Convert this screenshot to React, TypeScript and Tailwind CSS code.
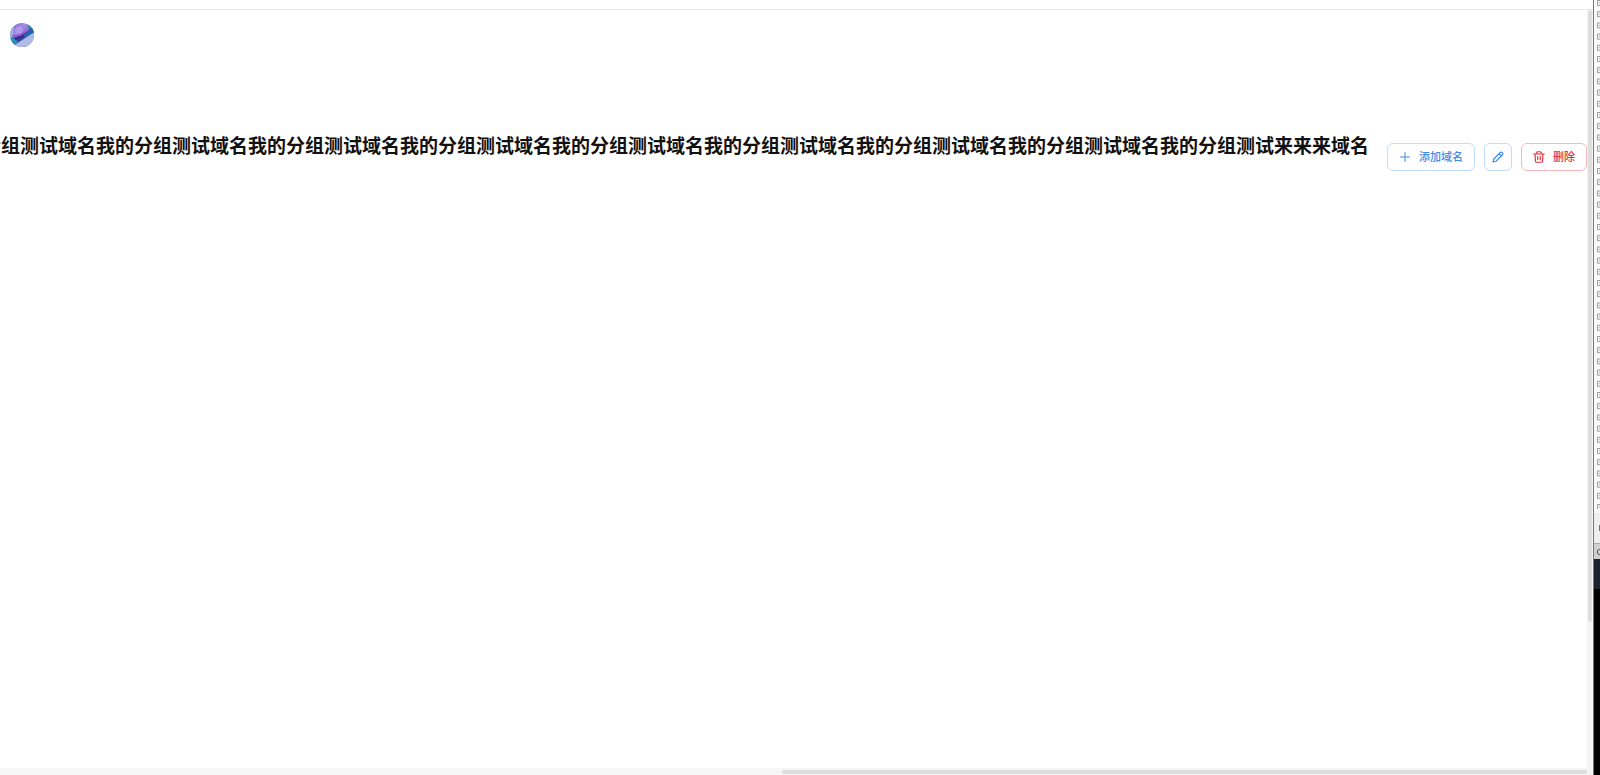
import React from "react";

const GROUP_NAME = "我的分组测试域名".repeat(8) + "我的分组测试来来来域名";
const TREE_ROWS = 46;

const iconProps = {
  viewBox: "0 0 24 24",
  fill: "none",
  stroke: "currentColor",
  strokeLinecap: "round",
  strokeLinejoin: "round",
  "aria-hidden": true,
} as const;

const PlusIcon = () => (
  <svg {...iconProps} strokeWidth={2} className="h-3 w-3">
    <path d="M12 3v18M3 12h18" />
  </svg>
);

const PencilIcon = () => (
  <svg {...iconProps} strokeWidth={2.2} className="h-3 w-3">
    <path d="M2 22l1.5-6L16.5 3a2.5 2.5 0 0 1 3.6 0l.9.9a2.5 2.5 0 0 1 0 3.6L8 20.5 2 22zM14.5 5.5l4 4" />
  </svg>
);

const TrashIcon = () => (
  <svg {...iconProps} strokeWidth={2.4} className="h-3 w-3">
    <path d="M1.5 6h21M7.5 6V3.5a2 2 0 0 1 2-2h5a2 2 0 0 1 2 2V6M4 6l1 14.5A2 2 0 0 0 7 22.5h10a2 2 0 0 0 2-2L20 6M9.5 11v6.5M14.5 11v6.5" />
  </svg>
);

const Avatar = () => (
  <svg viewBox="0 0 24 24" className="h-6 w-6" role="img" aria-label="avatar">
    <defs>
      <clipPath id="avatar-clip">
        <circle cx="12" cy="12" r="12" />
      </clipPath>
      <linearGradient id="avatar-sky" x1="0" y1="0" x2="1" y2="1">
        <stop offset="0" stopColor="#6a62b8" />
        <stop offset="0.35" stopColor="#a88be6" />
        <stop offset="0.6" stopColor="#7c62cc" />
        <stop offset="1" stopColor="#2c3fa0" />
      </linearGradient>
    </defs>
    <g clipPath="url(#avatar-clip)">
      <rect width="24" height="24" fill="url(#avatar-sky)" />
      <path d="M0 0h5L2 16H0z" fill="#9db4de" />
      <path d="M17 0h7v12l-4-3z" fill="#2286b4" />
      <ellipse cx="9" cy="7" rx="5" ry="4" transform="rotate(-40 9 7)" fill="#b196ee" stroke="#9a78da" strokeWidth="0.7" />
      <path d="M1 15l8-2 15-9v7L4 24z" fill="#3a439f" />
      <path d="M2 13l8-1 9-5" stroke="#9656ce" strokeWidth="1.4" fill="none" />
      <path d="M14 12l10-7v6l-9 5z" fill="#1d6cab" />
      <path d="M0 15l4 0 4 4-5 4H0z" fill="#2493b6" />
      <path d="M5 16l9-3" stroke="#3b2b86" strokeWidth="2" />
      <path d="M3 23l10-6.5 11-7V24H3z" fill="#b0bce6" />
    </g>
  </svg>
);

/** Sliver of the editor window that sits behind the browser. */
const EditorEdge = () => (
  <aside className="flex w-[7px] shrink-0 flex-col overflow-hidden border-l border-[#777777] bg-black">
    <div className="flex flex-col bg-[#fafafa] pb-1 pl-[3px]">
      <svg width="4" height="509" aria-hidden="true" fill="none" stroke="#999999">
        {Array.from({ length: TREE_ROWS }, (_, i) => (
          <path key={i} d={`M4 ${i * 11.2 + 0.5}H.5v5H4M2 ${i * 11.2 + 3}h2`} />
        ))}
      </svg>
    </div>
    <div className="flex h-[30px] items-center justify-end bg-[#eeeeee]">
      <div className="h-1.5 w-px bg-[#8a6d3b]" />
    </div>
    <div className="h-4 border-t border-[#aaaaaa] bg-[#d0d0d0] pl-[3px] pt-[5px]">
      <svg width="4" height="6" aria-hidden="true" fill="none" stroke="#444444">
        <path d="M4 .5H2.5A2 2 0 0 0 .5 3a2 2 0 0 0 2 2.5H4" />
      </svg>
    </div>
    <div className="h-[30px] bg-[#1b232e]" />
  </aside>
);

const BUTTON =
  "flex h-7 shrink-0 items-center justify-center gap-2 rounded-md border bg-white pb-px text-[11px] font-medium";

const App: React.FC = () => {
  return (
    <div className="flex h-screen overflow-hidden bg-white font-['Noto_Sans_CJK_SC',sans-serif]">
      <div className="flex min-w-0 flex-1 flex-col">
        <div className="h-2.5 shrink-0 border-b border-[#e8e8e8]" />

        <div className="flex min-h-0 flex-1">
          <div className="flex min-w-0 flex-1 flex-col">
            <header className="flex h-[50px] shrink-0 items-center px-2.5">
              <Avatar />
            </header>

            {/* Group title and actions */}
            <main className="min-h-0 flex-1 pt-[71px]">
              <div className="flex items-start gap-[18px]">
                <div className="flex min-w-0 flex-1 justify-end overflow-hidden">
                  <h1 className="whitespace-nowrap text-[19px] font-bold leading-7 text-[#111111]">
                    {GROUP_NAME}
                  </h1>
                </div>
                <div className="flex shrink-0 gap-[9px] pt-3">
                  <button type="button" className={`${BUTTON} w-[88px] border-[#c2dcfd] text-[#3b8ceb]`}>
                    <PlusIcon />
                    添加域名
                  </button>
                  <button
                    type="button"
                    aria-label="编辑"
                    className={`${BUTTON} w-7 border-[#c2dcfd] text-[#3b8ceb]`}
                  >
                    <PencilIcon />
                  </button>
                  <button type="button" className={`${BUTTON} w-[66px] border-[#f9b8be] text-[#e23440]`}>
                    <TrashIcon />
                    删除
                  </button>
                </div>
              </div>
            </main>

            {/* Horizontal scrollbar */}
            <div className="flex h-[7px] shrink-0 items-center justify-end bg-[#f6f6f6]">
              <div className="h-1 w-[805px] rounded-sm bg-[#dcdcdc]" />
            </div>
          </div>

          {/* Vertical scrollbar */}
          <div className="flex w-1.5 shrink-0 flex-col items-center bg-[#f4f4f4]">
            <div className="h-4/5 w-1 rounded-sm bg-[#dedede]" />
          </div>
        </div>
      </div>

      <EditorEdge />
    </div>
  );
};

export default App;
